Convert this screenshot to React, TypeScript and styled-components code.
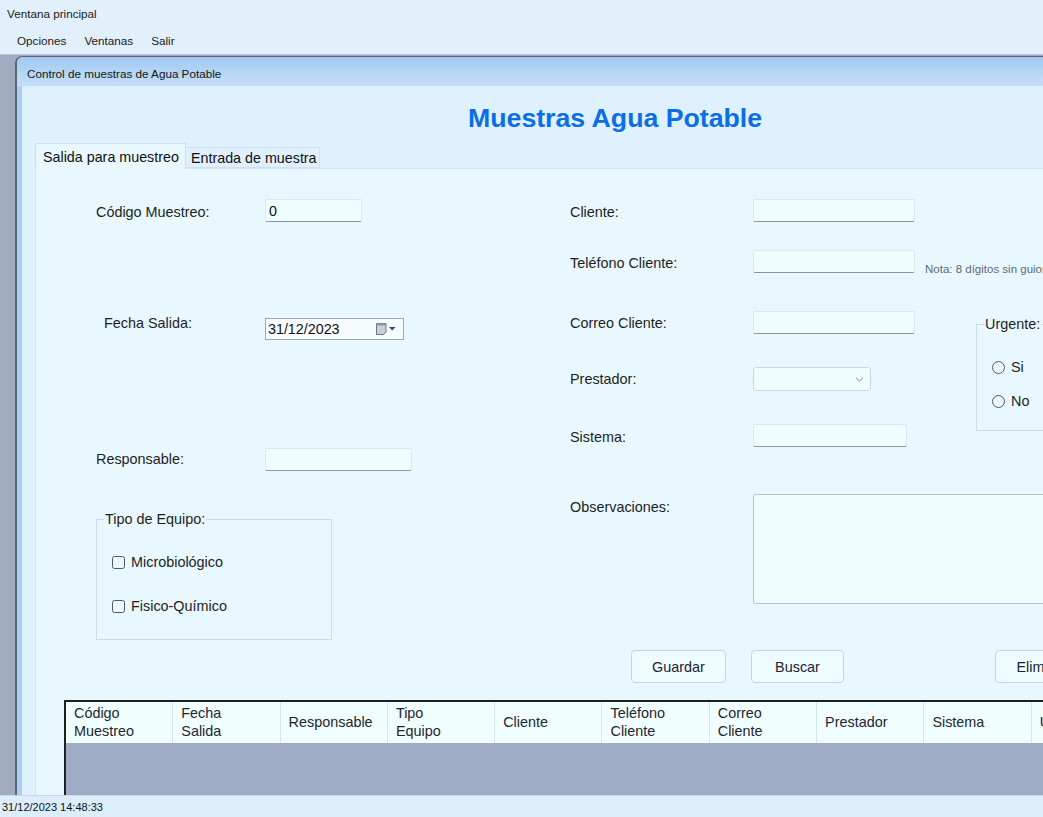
import React from "react";
import styled, { createGlobalStyle } from "styled-components";

const GlobalStyle = createGlobalStyle`
  html, body { margin: 0; padding: 0; }
  body { font-family: "Liberation Sans", Arial, sans-serif; overflow: hidden; }
  * { box-sizing: border-box; }
`;

const FONT = `"Liberation Sans", Arial, sans-serif`;

const Screen = styled.div`
  width: 1043px;
  height: 817px;
  display: flex;
  flex-direction: column;
  overflow: hidden;
  background: #e2f0fb;
  font-family: ${FONT};
`;

const AppTitle = styled.div`
  height: 27px;
  flex: none;
  padding-left: 7px;
  display: flex;
  align-items: center;
  font-size: 11.7px;
  color: #1a1a1a;
`;

const MenuBar = styled.nav`
  height: 27px;
  flex: none;
  padding-left: 17px;
  display: flex;
  align-items: center;
  gap: 18px;
  font-size: 11.7px;
  color: #1a1a1a;
`;

const MenuItem = styled.span`
  cursor: default;
`;

const Mdi = styled.div`
  flex: 1;
  min-height: 0;
  display: flex;
  background: #a1acc1;
  border-top: 1px solid #bcc6d2;
  padding: 1px 0 0 15px;
  overflow: hidden;
`;

const ChildWindow = styled.section`
  flex: none;
  width: 1300px;
  display: flex;
  flex-direction: column;
  background: #a8cff4;
  border-left: 2px solid #5b6573;
  border-top: 1px solid #5b6573;
  border-top-left-radius: 7px;
`;

const ChildTitle = styled.div`
  height: 29px;
  flex: none;
  padding: 4px 0 0 10px;
  display: flex;
  align-items: center;
  font-size: 11.7px;
  color: #151515;
  background: linear-gradient(#9fc8f0, #c6e0f8);
  border-top-left-radius: 6px;
`;

const ChildClient = styled.div`
  flex: 1;
  min-height: 0;
  margin-left: 5px;
  background: #dff0fe;
  display: flex;
  flex-direction: column;
`;

const Heading = styled.h1`
  margin: 0;
  height: 57px;
  flex: none;
  padding: 17px 0 0 446px;
  font: bold 26.7px/30px ${FONT};
  color: #0b6ee6;
`;

const TabStrip = styled.div`
  height: 25px;
  flex: none;
  display: flex;
  align-items: flex-end;
  padding-left: 13px;
  position: relative;
  z-index: 1;
`;

const Tab = styled.div<{ $active?: boolean; $w: number }>`
  width: ${(p) => p.$w}px;
  height: ${(p) => (p.$active ? 26 : 21)}px;
  margin-bottom: ${(p) => (p.$active ? -1 : 0)}px;
  padding-left: ${(p) => (p.$active ? 7 : 5)}px;
  display: flex;
  align-items: center;
  font-size: 14.3px;
  color: #111;
  background: ${(p) => (p.$active ? "#e8f8fe" : "#e0f0fd")};
  border: 1px solid #d0e0ee;
  border-bottom: ${(p) => (p.$active ? "none" : "1px solid #d0e0ee")};
  border-left: ${(p) => (p.$active ? "1px solid #d0e0ee" : "none")};
  white-space: nowrap;
`;

const TabPage = styled.div`
  flex: 1;
  min-height: 0;
  margin-left: 13px;
  background: #e8f8fe;
  border-top: 1px solid #d3e3f1;
  border-left: 1px solid #d3e3f1;
  display: flex;
  flex-direction: column;
`;

const FormArea = styled.div`
  flex: none;
  display: flex;
  align-items: flex-start;
  padding-left: 60px;
`;

const Column = styled.div<{ $w?: number; $pt?: number }>`
  ${(p) => (p.$w ? `width: ${p.$w}px; flex: none;` : "flex: 1;")}
  padding-top: ${(p) => p.$pt ?? 0}px;
  display: flex;
  flex-direction: column;
`;

const FieldRow = styled.div<{ $mt?: number }>`
  display: flex;
  align-items: flex-start;
  margin-top: ${(p) => p.$mt ?? 0}px;
`;

const FieldLabel = styled.label<{ $w: number; $indent?: number; $dy?: number }>`
  width: ${(p) => p.$w}px;
  flex: none;
  padding-left: ${(p) => p.$indent ?? 0}px;
  margin-top: ${(p) => p.$dy ?? 5}px;
  font-size: 14.4px;
  line-height: 16px;
  color: #1e1e1e;
  white-space: nowrap;
`;

const TextBox = styled.input<{ $w: number }>`
  width: ${(p) => p.$w}px;
  height: 23px;
  flex: none;
  margin: 0;
  padding: 0 3px;
  border: 1px solid #dbe7f2;
  border-bottom-color: #8a94a3;
  border-radius: 2px;
  background: #f0fdff;
  font: 14.3px ${FONT};
  color: #111;
  outline: none;
`;

const TextArea = styled.textarea`
  width: 330px;
  height: 110px;
  flex: none;
  margin: 0;
  padding: 3px;
  border: 1px solid #b7c2ce;
  border-radius: 2px;
  background: #f0fdff;
  font: 14px ${FONT};
  resize: none;
  outline: none;
`;

const DatePicker = styled.div`
  width: 139px;
  height: 22px;
  flex: none;
  display: flex;
  align-items: center;
  justify-content: space-between;
  padding: 0 6px 0 2px;
  border: 1px solid #a3a7ad;
  background: #f6fcff;
  font-size: 14.3px;
  color: #111;
`;

const ComboBox = styled.div`
  width: 118px;
  height: 24px;
  flex: none;
  display: flex;
  align-items: center;
  justify-content: flex-end;
  padding-right: 6px;
  border: 1px solid #c9d8e8;
  border-radius: 3px;
  background: #f0fdff;
`;

const Note = styled.span`
  margin: 12px 0 -3px 10px;
  font-size: 11.5px;
  line-height: 14px;
  color: #5f6878;
  white-space: nowrap;
`;

const GroupBox = styled.fieldset<{ $w: number; $mt: number; $pb: number }>`
  width: ${(p) => p.$w}px;
  flex: none;
  margin: ${(p) => p.$mt}px 0 0 0;
  padding: 0 0 ${(p) => p.$pb}px 15px;
  min-width: 0;
  border: 1px solid #c9dcf0;
  display: flex;
  flex-direction: column;
`;

const GroupLegend = styled.legend`
  margin-left: -8px;
  padding: 0 1px;
  font-size: 14.4px;
  line-height: 16px;
  color: #1e1e1e;
`;

const OptionRow = styled.label<{ $mt: number }>`
  height: 20px;
  margin-top: ${(p) => p.$mt}px;
  display: flex;
  align-items: center;
  gap: 6px;
  font-size: 14.4px;
  color: #1e1e1e;
  white-space: nowrap;
`;

const CheckBox = styled.input.attrs({ type: "checkbox" })`
  appearance: none;
  width: 13px;
  height: 13px;
  margin: 0;
  border: 1px solid #4f5868;
  border-radius: 2.5px;
  background: #edf6fe;
`;

const Radio = styled.input.attrs({ type: "radio" })`
  appearance: none;
  width: 13px;
  height: 13px;
  margin: 0;
  border: 1px solid #4f5868;
  border-radius: 50%;
  background: #edf6fe;
`;

const MidBlock = styled.div`
  display: flex;
  align-items: flex-start;
  margin-top: 38px;
`;

const ButtonRow = styled.div`
  flex: none;
  display: flex;
  margin: 10px 0 0 595px;
`;

const Button = styled.button<{ $w: number; $ml?: number }>`
  width: ${(p) => p.$w}px;
  height: 33px;
  flex: none;
  margin: 0 0 0 ${(p) => p.$ml ?? 0}px;
  padding: 0;
  border: 1px solid #c2d4ee;
  border-radius: 4px;
  background: #effcff;
  font: 14.4px ${FONT};
  color: #1b2330;
`;

const DataGrid = styled.div`
  flex: 1;
  min-height: 0;
  margin: 17px 0 0 28px;
  border-top: 2px solid #202020;
  border-left: 2px solid #202020;
  background: #9eacc6;
  display: flex;
  flex-direction: column;
`;

const HeaderRow = styled.div`
  display: grid;
  grid-template-columns: repeat(11, 107.3px);
  height: 41px;
  flex: none;
  background: #f0feff;
`;

const HeaderCell = styled.div`
  padding-left: 8px;
  display: flex;
  flex-direction: column;
  justify-content: center;
  border-right: 1px solid #d5e5f1;
  font-size: 14.4px;
  line-height: 17.5px;
  color: #1e2530;
  white-space: nowrap;
  overflow: hidden;
`;

const StatusBar = styled.footer`
  height: 22px;
  flex: none;
  padding-left: 2px;
  display: flex;
  align-items: center;
  background: #dcedfb;
  border-top: 1px solid #c9d9ea;
  font-size: 11px;
  color: #111;
`;

const CalendarIcon = () => (
  <svg width="22" height="14" viewBox="0 0 22 14">
    <path d="M1.5 1.5h9.5v8.5l-2.5 2.5H1.5z" fill="#c8cfdb" stroke="#6c7481" />
    <path d="M1.5 1.5h9.5v2H1.5z" fill="#8d95a2" />
    <path d="M14 5h6.5l-3.25 3.4z" fill="#2c4a78" />
  </svg>
);

const Chevron = () => (
  <svg width="9" height="5" viewBox="0 0 9 5">
    <path d="M1 0.8l3.5 3.2 3.5-3.2" fill="none" stroke="#7f8896" strokeWidth="1" />
  </svg>
);

const columns: string[][] = [
  ["Código", "Muestreo"],
  ["Fecha", "Salida"],
  ["Responsable"],
  ["Tipo", "Equipo"],
  ["Cliente"],
  ["Teléfono", "Cliente"],
  ["Correo", "Cliente"],
  ["Prestador"],
  ["Sistema"],
  ["Urgente"],
  ["Observaciones"],
];

export default function App() {
  return (
    <>
      <GlobalStyle />
      <Screen>
        <AppTitle>Ventana principal</AppTitle>
        <MenuBar>
          <MenuItem>Opciones</MenuItem>
          <MenuItem>Ventanas</MenuItem>
          <MenuItem>Salir</MenuItem>
        </MenuBar>
        <Mdi>
          <ChildWindow>
            <ChildTitle>Control de muestras de Agua Potable</ChildTitle>
            <ChildClient>
              <Heading>Muestras Agua Potable</Heading>
              <TabStrip>
                <Tab $active $w={151}>Salida para muestreo</Tab>
                <Tab $w={134}>Entrada de muestra</Tab>
              </TabStrip>
              <TabPage>
                <FormArea>
                  <Column $w={474} $pt={30}>
                    <FieldRow>
                      <FieldLabel $w={169}>Código Muestreo:</FieldLabel>
                      <TextBox $w={97} defaultValue="0" />
                    </FieldRow>
                    <FieldRow $mt={96}>
                      <FieldLabel $w={169} $indent={8} $dy={-3}>
                        Fecha Salida:
                      </FieldLabel>
                      <DatePicker>
                        <span>31/12/2023</span>
                        <CalendarIcon />
                      </DatePicker>
                    </FieldRow>
                    <FieldRow $mt={108}>
                      <FieldLabel $w={169} $dy={3}>Responsable:</FieldLabel>
                      <TextBox $w={147} />
                    </FieldRow>
                    <GroupBox $w={236} $mt={40} $pb={23}>
                      <GroupLegend>Tipo de Equipo:</GroupLegend>
                      <OptionRow $mt={25}>
                        <CheckBox />
                        Microbiológico
                      </OptionRow>
                      <OptionRow $mt={24}>
                        <CheckBox />
                        Fisico-Químico
                      </OptionRow>
                    </GroupBox>
                  </Column>
                  <Column $pt={30}>
                    <FieldRow>
                      <FieldLabel $w={183}>Cliente:</FieldLabel>
                      <TextBox $w={162} />
                    </FieldRow>
                    <FieldRow $mt={28}>
                      <FieldLabel $w={183}>Teléfono Cliente:</FieldLabel>
                      <TextBox $w={162} />
                      <Note>Nota: 8 dígitos sin guiones</Note>
                    </FieldRow>
                    <MidBlock>
                      <Column $w={406}>
                        <FieldRow>
                          <FieldLabel $w={183} $dy={4}>Correo Cliente:</FieldLabel>
                          <TextBox $w={162} />
                        </FieldRow>
                        <FieldRow $mt={33}>
                          <FieldLabel $w={183} $dy={4}>Prestador:</FieldLabel>
                          <ComboBox>
                            <Chevron />
                          </ComboBox>
                        </FieldRow>
                        <FieldRow $mt={33}>
                          <FieldLabel $w={183}>Sistema:</FieldLabel>
                          <TextBox $w={154} />
                        </FieldRow>
                      </Column>
                      <GroupBox $w={140} $mt={5} $pb={19}>
                        <GroupLegend>Urgente:</GroupLegend>
                        <OptionRow $mt={25}>
                          <Radio name="urgente" />
                          Si
                        </OptionRow>
                        <OptionRow $mt={14}>
                          <Radio name="urgente" />
                          No
                        </OptionRow>
                      </GroupBox>
                    </MidBlock>
                    <FieldRow $mt={47}>
                      <FieldLabel $w={183}>Observaciones:</FieldLabel>
                      <TextArea />
                    </FieldRow>
                  </Column>
                </FormArea>
                <ButtonRow>
                  <Button $w={95}>Guardar</Button>
                  <Button $w={93} $ml={25}>Buscar</Button>
                  <Button $w={95} $ml={151}>Eliminar</Button>
                </ButtonRow>
                <DataGrid>
                  <HeaderRow>
                    {columns.map((lines) => (
                      <HeaderCell key={lines.join(" ")}>
                        {lines.map((l) => (
                          <span key={l}>{l}</span>
                        ))}
                      </HeaderCell>
                    ))}
                  </HeaderRow>
                </DataGrid>
              </TabPage>
            </ChildClient>
          </ChildWindow>
        </Mdi>
        <StatusBar>31/12/2023 14:48:33</StatusBar>
      </Screen>
    </>
  );
}
